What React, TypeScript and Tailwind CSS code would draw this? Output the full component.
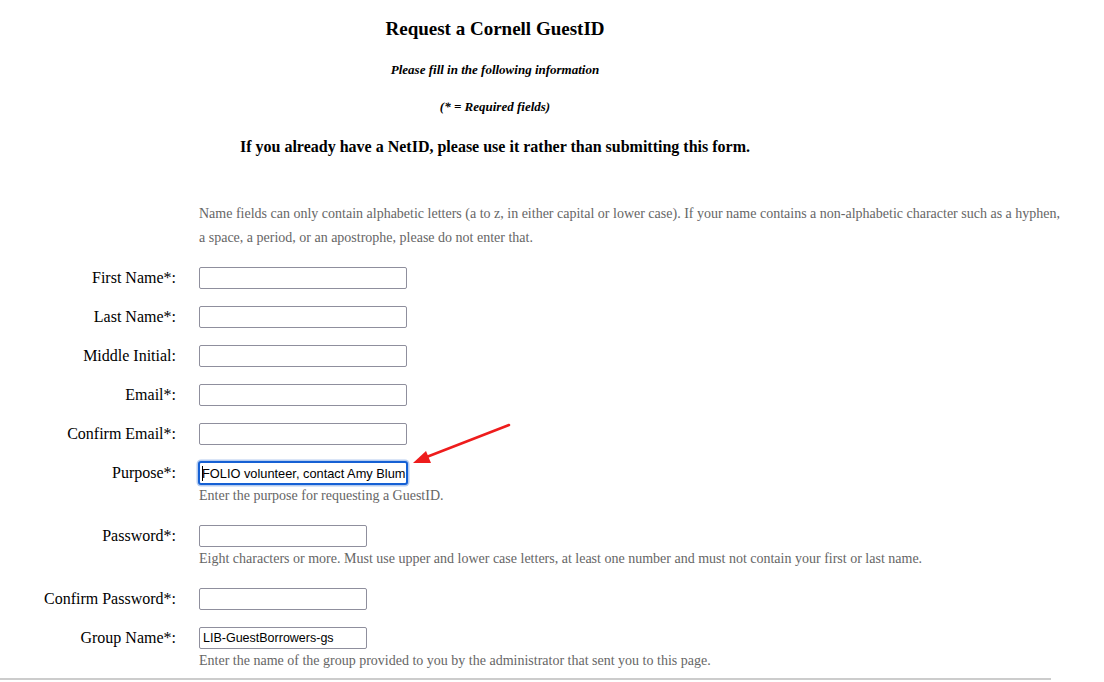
import React from "react";

type Field = {
  label: string;
  width?: "wide" | "short";
  value?: string;
  focused?: boolean;
  help?: string;
};

const FIELDS: Field[] = [
  { label: "First Name*:" },
  { label: "Last Name*:" },
  { label: "Middle Initial:" },
  { label: "Email*:" },
  { label: "Confirm Email*:" },
  {
    label: "Purpose*:",
    value: "FOLIO volunteer, contact Amy Blum",
    focused: true,
    help: "Enter the purpose for requesting a GuestID.",
  },
  {
    label: "Password*:",
    width: "short",
    help: "Eight characters or more. Must use upper and lower case letters, at least one number and must not contain your first or last name.",
  },
  { label: "Confirm Password*:", width: "short" },
  {
    label: "Group Name*:",
    width: "short",
    value: "LIB-GuestBorrowers-gs",
    help: "Enter the name of the group provided to you by the administrator that sent you to this page.",
  },
];

function TextBox({ field }: { field: Field }) {
  const w = field.width === "short" ? "w-[168px]" : "w-[208px]";
  if (field.focused) {
    return (
      <div className={`${w} h-[22px] relative`}>
        <input
          readOnly
          value={field.value}
          className="absolute -left-px -top-px w-[210px] h-[24px] border-2 border-[#1560d4] rounded-[3px] bg-white pl-[2px] text-[12.8px] text-black outline-none shadow-[0_0_0_1.5px_#b5ccf0]"
          style={{ fontFamily: '"Liberation Sans", Arial, sans-serif' }}
        />
        <span className="absolute left-[3px] top-[4px] w-px h-[15px] bg-black" />
      </div>
    );
  }
  return (
    <input
      readOnly
      value={field.value ?? ""}
      className={`${w} h-[22px] border border-[#8f8f9d] rounded-[2px] bg-white px-[3px] text-[12.5px] text-black outline-none`}
      style={{ fontFamily: '"Liberation Sans", Arial, sans-serif' }}
    />
  );
}

function Row({ field, last }: { field: Field; last?: boolean }) {
  return (
    <div className={`flex ${last ? "pb-[5px]" : "pb-[17px]"}`}>
      <label className="w-[176px] h-[22px] flex items-center justify-end text-[16px] leading-[18px] text-black whitespace-nowrap">
        {field.label}
      </label>
      <div className="ml-[23px] flex flex-col">
        <TextBox field={field} />
        {field.help && (
          <div className="text-[14px] leading-[24px] text-[#666] whitespace-nowrap">{field.help}</div>
        )}
      </div>
    </div>
  );
}

export default function App() {
  return (
    <div
      className="relative w-[1104px] h-[682px] overflow-hidden bg-white text-black"
      style={{ fontFamily: '"Liberation Serif", "Times New Roman", serif' }}
    >
      <div className="w-[990px] text-center pt-[17px]">
        <h3 className="text-[19px] leading-[24px] font-bold">Request a Cornell GuestID</h3>
        <h6 className="mt-[21px] text-[13px] leading-[16px] font-bold italic">
          Please fill in the following information
        </h6>
        <h6 className="mt-[21px] text-[13px] leading-[16px] font-bold italic">(* = Required fields)</h6>
        <p className="mt-[22px] text-[16px] leading-[20px] font-bold">
          If you already have a NetID, please use it rather than submitting this form.
        </p>
      </div>

      <div className="mt-[45px]">
        <div className="flex pb-[17px]">
          <div className="w-[176px]" />
          <p className="ml-[23px] w-[866px] text-[14px] leading-[24px] text-[#666]">
            Name fields can only contain alphabetic letters (a to z, in either capital or lower case). If your
            name contains a non-alphabetic character such as a hyphen, a space, a period, or an apostrophe,
            please do not enter that.
          </p>
        </div>
        {FIELDS.map((f, i) => (
          <Row key={f.label} field={f} last={i === FIELDS.length - 1} />
        ))}
        <div className="w-[1051px] h-[2px] bg-[#cccccc]" />
      </div>

      {/* red pointer at the purpose field */}
      <svg className="absolute left-0 top-0 pointer-events-none" width="1104" height="682">
        <line x1="509" y1="425" x2="424" y2="458" stroke="#ee1c1c" strokeWidth="2.5" strokeLinecap="round" />
        <polygon points="413,463 426,451 431,463" fill="#ee1c1c" />
      </svg>
    </div>
  );
}
